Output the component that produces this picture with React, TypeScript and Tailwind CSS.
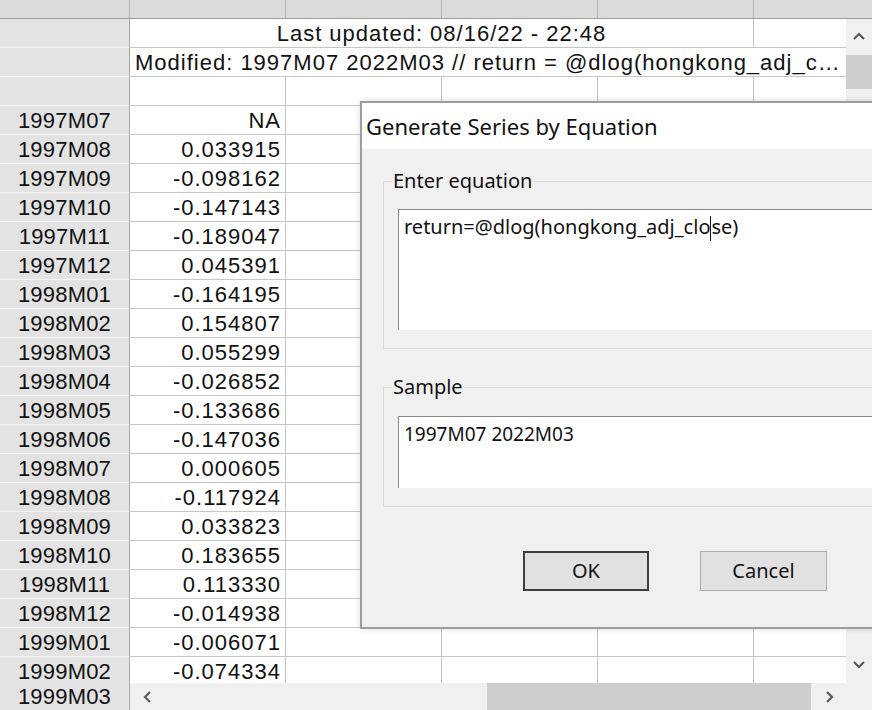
import React from "react";

const rows: [string, string][] = [
  ["1997M07", "NA"],
  ["1997M08", "0.033915"],
  ["1997M09", "-0.098162"],
  ["1997M10", "-0.147143"],
  ["1997M11", "-0.189047"],
  ["1997M12", "0.045391"],
  ["1998M01", "-0.164195"],
  ["1998M02", "0.154807"],
  ["1998M03", "0.055299"],
  ["1998M04", "-0.026852"],
  ["1998M05", "-0.133686"],
  ["1998M06", "-0.147036"],
  ["1998M07", "0.000605"],
  ["1998M08", "-0.117924"],
  ["1998M09", "0.033823"],
  ["1998M10", "0.183655"],
  ["1998M11", "0.113330"],
  ["1998M12", "-0.014938"],
  ["1999M01", "-0.006071"],
  ["1999M02", "-0.074334"],
];

const sheetFont = { fontFamily: '"Liberation Sans", Arial, sans-serif' };
const dlgFont = { fontFamily: '"Noto Sans", "Open Sans", sans-serif' };

function Chevron({ dir }: { dir: "up" | "down" | "left" | "right" }) {
  const pts = {
    up: "1,8 6,3 11,8",
    down: "1,3 6,8 11,3",
    left: "8,1 3,6 8,11",
    right: "4,1 9,6 4,11",
  }[dir];
  return (
    <svg width="12" height="12" viewBox="0 0 12 12">
      <polyline points={pts} fill="none" stroke="#5a5a5a" strokeWidth="2.2" />
    </svg>
  );
}

function RowHead({ label }: { label?: string }) {
  return (
    <div className="w-[130px] shrink-0 h-full flex items-center justify-center bg-[#e3e3e3] border-r border-r-[#a9a9a9] border-b border-b-[#f4f4f4] text-[22px] tracking-[0.2px] text-[#111]">
      {label}
    </div>
  );
}

function Cell({ value }: { value?: string }) {
  return (
    <div className="w-[156px] shrink-0 h-full flex items-center justify-end pr-[4px] border-r border-b border-[#c6c6c6] text-[22px] tracking-[1px] text-[#111]">
      {value}
    </div>
  );
}

function DataRow({ label, value }: { label: string; value?: string }) {
  return (
    <div className="flex h-[29px] shrink-0">
      <RowHead label={label} />
      <Cell value={value} />
      <Cell />
      <Cell />
      <Cell />
      <div className="flex-1 h-full border-b border-[#c6c6c6]" />
    </div>
  );
}

function Sheet() {
  return (
    <div className="flex flex-col w-[872px] h-[710px]" style={sheetFont}>
      {/* column header strip */}
      <div className="flex h-[19px] shrink-0 bg-[#dcdcdc] border-b border-[#9c9c9c]">
        <div className="w-[130px] border-r border-[#b4b4b4]" />
        <div className="w-[156px] border-r border-[#b4b4b4]" />
        <div className="w-[156px] border-r border-[#b4b4b4]" />
        <div className="w-[156px] border-r border-[#b4b4b4]" />
        <div className="w-[156px] border-r border-[#b4b4b4]" />
        <div className="flex-1" />
      </div>

      <div className="flex h-[664px] shrink-0">
        <div className="w-[846px] overflow-hidden flex flex-col bg-white">
          <div className="flex h-[29px] shrink-0">
            <RowHead />
            <div className="w-[624px] shrink-0 h-full flex items-center justify-center border-r border-b border-[#c6c6c6] text-[22px] tracking-[1px] text-[#111]">
              Last updated: 08/16/22 - 22:48
            </div>
            <div className="flex-1 h-full border-b border-[#c6c6c6]" />
          </div>
          <div className="flex h-[29px] shrink-0">
            <RowHead />
            <div className="flex-1 min-w-0 h-full flex items-center pl-[5px] pr-[3px] border-b border-[#c6c6c6] text-[22px] tracking-[1px] text-[#111]">
              <span className="truncate">
                Modified: 1997M07 2022M03 // return = @dlog(hongkong_adj_close)
              </span>
            </div>
          </div>
          <DataRow label="" />
          {rows.map(([l, v]) => (
            <DataRow key={l} label={l} value={v} />
          ))}
        </div>
        {/* vertical scrollbar */}
        <div className="w-[26px] flex flex-col bg-[#f0f0f0]">
          <div className="h-[36px] flex items-center justify-center">
            <Chevron dir="up" />
          </div>
          <div className="h-[34px] bg-[#cdcdcd]" />
          <div className="flex-1" />
          <div className="h-[36px] flex items-center justify-center">
            <Chevron dir="down" />
          </div>
        </div>
      </div>

      <div className="flex flex-1 min-h-0">
        <div className="w-[130px] pt-[2px] flex justify-center bg-[#e3e3e3] border-r border-[#a9a9a9] text-[22px] leading-[24px] tracking-[0.2px] text-[#111]">
          1999M03
        </div>
        <div className="flex-1 flex bg-[#f0f0f0]">
          <div className="w-[36px] flex items-center justify-center">
            <Chevron dir="left" />
          </div>
          <div className="w-[321px]" />
          <div className="flex-1 bg-[#cdcdcd]" />
          <div className="w-[35px] flex items-center justify-center">
            <Chevron dir="right" />
          </div>
        </div>
        <div className="w-[26px] bg-[#f0f0f0]" />
      </div>
    </div>
  );
}

function Dialog() {
  return (
    <div
      className="absolute left-[360px] top-[101px] w-[580px] h-[528px] border-2 border-[#9d9d9d] bg-[#f0f0f0] flex flex-col shadow-[0_0_6px_rgba(0,0,0,0.15)]"
      style={dlgFont}
    >
      <div className="h-[46px] bg-white flex items-center pl-[4px] text-[22px] text-[#111]">
        Generate Series by Equation
      </div>
      <div className="flex-1 flex flex-col pl-[21px] pr-[20px]">
        <fieldset className="mt-[18px] border border-[#d9d9d9] pl-[14px] pr-[14px] pb-[18px]">
          <legend className="-ml-[6px] px-[1px] text-[20px] leading-[28px] text-[#111]">
            Enter equation
          </legend>
          <div className="mt-[14px] h-[121px] bg-white border-t border-l border-[#8a8a8a] pl-[5px] pt-[2px] text-[20px] text-[#111]">
            return=@dlog(hongkong_adj_clo
            <span className="inline-block w-px h-[25px] bg-[#111] align-middle" />
            se)
          </div>
        </fieldset>
        <fieldset className="mt-[24px] border border-[#d9d9d9] pl-[14px] pr-[14px] pb-[18px]">
          <legend className="-ml-[6px] px-[1px] text-[20px] leading-[28px] text-[#111]">
            Sample
          </legend>
          <div className="mt-[15px] h-[72px] bg-white border-t border-l border-[#8a8a8a] pl-[5px] pt-[3px] text-[19px] text-[#111]">
            1997M07 2022M03
          </div>
        </fieldset>
        <div className="mt-[44px] flex gap-[51px] pl-[140px]">
          <button className="w-[126px] h-[40px] bg-[#e1e1e1] border-2 border-[#3f3f3f] text-[20px] text-[#111]">
            OK
          </button>
          <button className="w-[127px] h-[40px] bg-[#e1e1e1] border border-[#adadad] text-[20px] text-[#111]">
            Cancel
          </button>
        </div>
      </div>
    </div>
  );
}

export default function App() {
  return (
    <div className="relative w-[872px] h-[710px] overflow-hidden bg-white">
      <Sheet />
      <Dialog />
    </div>
  );
}
